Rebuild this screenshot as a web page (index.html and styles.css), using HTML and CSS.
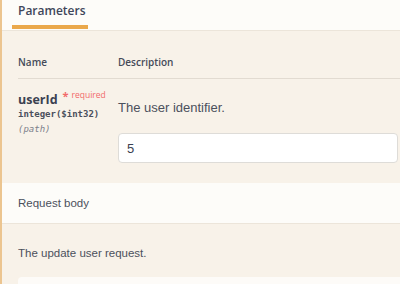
FILE: index.html
```html
<!DOCTYPE html>
<html lang="en">
<head>
  <meta charset="UTF-8">
  <meta name="viewport" content="width=device-width, initial-scale=1.0">
  <title>PUT /users/{userId}</title>
  <link rel="stylesheet" href="styles.css">
</head>
<body>
  <div class="opblock">
    <div class="tab-header">
      <div class="tab-item">
        <h4>Parameters</h4>
        <span class="tab-line"></span>
      </div>
    </div>

    <div class="parameters">
      <div class="param-head">
        <div class="col-name">Name</div>
        <div class="col-desc">Description</div>
      </div>
      <div class="param-row">
        <div class="col-name">
          <div class="param-name">userId<span class="req-star">*</span><span class="req-text">required</span></div>
          <div class="param-type">integer($int32)</div>
          <div class="param-in">(path)</div>
        </div>
        <div class="col-desc">
          <p class="param-desc">The user identifier.</p>
          <input type="text" class="param-input" value="5">
        </div>
      </div>
    </div>

    <div class="section-header">
      <h4>Request body</h4>
    </div>

    <div class="body-section">
      <p class="body-desc">The update user request.</p>
      <div class="body-editor"></div>
    </div>
  </div>
</body>
</html>
```

FILE: styles.css
```css
body {
  margin: 0;
  background-color: #f8f2e9;
  color: #3b4151;
  font-family: 'Open Sans', 'Liberation Sans', sans-serif;
}

.opblock {
  border-left: 2px solid #ecc590;
  height: 284px;
  overflow: hidden;
}

.tab-header {
  height: 30px;
  background-color: #fdfcf9;
  border-bottom: 1px solid #ece5da;
  padding-left: 10px;
}

.tab-item {
  width: 76px;
}

.tab-item h4 {
  margin: 0;
  padding: 3px 0 0 6px;
  font-size: 12px;
  line-height: 16px;
  font-weight: 600;
  color: #40465a;
}

.tab-line {
  display: block;
  height: 4px;
  margin-top: 6px;
  background-color: #eaa84b;
}

.parameters {
  padding-left: 16px;
}

.param-head,
.param-row {
  display: grid;
  grid-template-columns: 100px 1fr;
}

.param-head {
  padding: 24px 0 9px;
  border-bottom: 1px solid #e2dbd1;
  font-size: 10px;
  line-height: 14px;
  font-weight: 600;
  color: #454a58;
}

.param-row {
  padding-bottom: 20px;
}

.param-row .col-name {
  padding-top: 8px;
}

.param-name {
  font-size: 12.5px;
  line-height: 16px;
  font-weight: 700;
}

.req-star {
  color: #f26a6a;
  font-size: 11px;
  margin-left: 5px;
  vertical-align: 4px;
}

.req-text {
  color: #f26a6a;
  font-size: 8.5px;
  font-weight: 400;
  margin-left: 3px;
  vertical-align: 6px;
}

.param-type {
  font-family: 'DejaVu Sans Mono', monospace;
  font-size: 9px;
  font-weight: 700;
  line-height: 13px;
  color: #4a4f5c;
}

.param-in {
  font-family: 'DejaVu Sans Mono', monospace;
  font-size: 9px;
  font-style: italic;
  line-height: 16px;
  color: #7d818b;
}

.param-row .col-desc {
  padding-top: 21px;
}

.param-desc {
  margin: 0;
  font-family: 'Liberation Sans', Arial, sans-serif;
  font-size: 13px;
  line-height: 16px;
  color: #4b505c;
}

.param-input {
  display: block;
  box-sizing: border-box;
  width: 280px;
  height: 30px;
  margin-top: 17px;
  padding: 0 8px;
  border: 1px solid #dedcd8;
  border-radius: 4px;
  background-color: white;
  font-family: 'Liberation Sans', Arial, sans-serif;
  font-size: 13px;
  color: #3b4151;
}

.section-header {
  background-color: #fdfcf9;
  border-bottom: 1px solid #ece5da;
  padding: 13px 16px;
}

.section-header h4 {
  margin: 0;
  font-family: 'Liberation Sans', Arial, sans-serif;
  font-size: 11.5px;
  line-height: 14px;
  font-weight: 400;
  color: #4b505c;
}

.body-section {
  padding: 22px 0 0 16px;
}

.body-desc {
  margin: 0;
  font-family: 'Liberation Sans', Arial, sans-serif;
  font-size: 11.5px;
  line-height: 14px;
  color: #4b505c;
}

.body-editor {
  height: 40px;
  margin-top: 17px;
  background-color: #fdfbf8;
  border-radius: 4px 0 0 0;
}
```
